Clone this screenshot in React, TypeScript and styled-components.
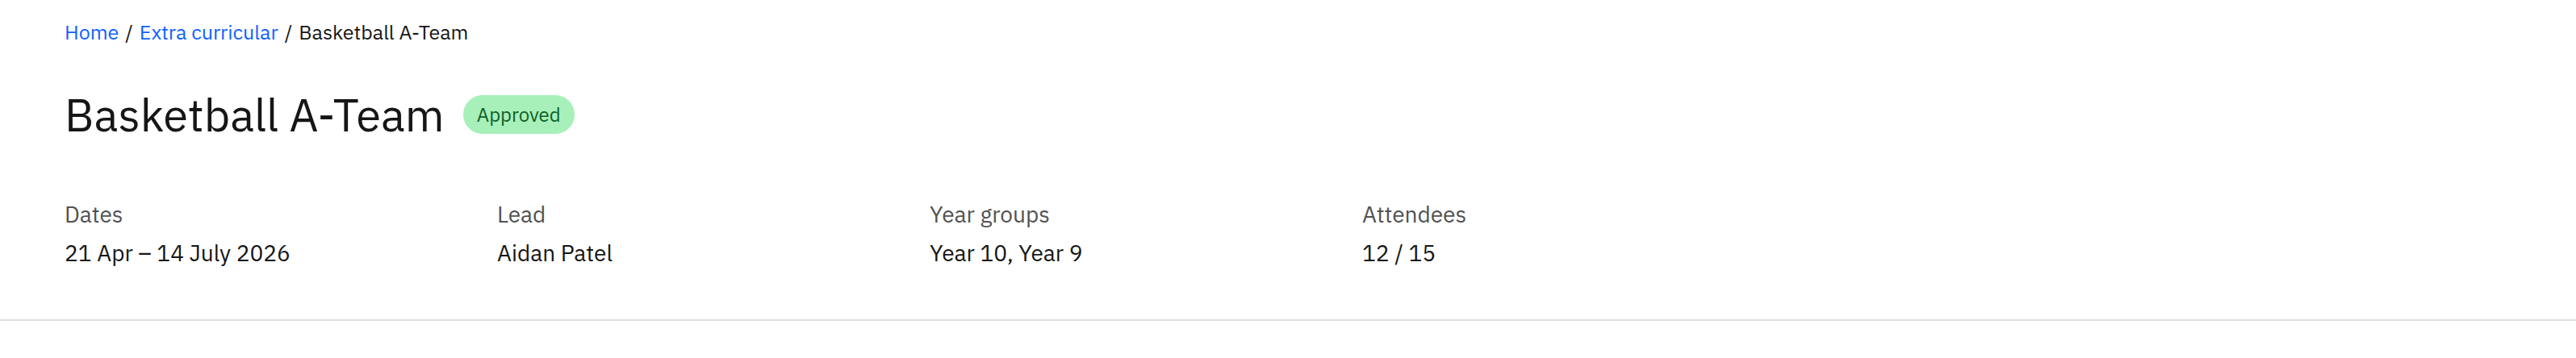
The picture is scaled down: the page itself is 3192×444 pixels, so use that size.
import React from "react";
import styled, { createGlobalStyle } from "styled-components";

const GlobalStyle = createGlobalStyle`
  html, body {
    margin: 0;
    padding: 0;
    background: #ffffff;
  }
  body {
    font-family: "IBM Plex Sans", "Noto Sans", "Liberation Sans", sans-serif;
    color: #161616;
  }
`;

const Header = styled.header`
  display: flex;
  flex-direction: column;
  padding: 24px 80px 64px;
  border-bottom: 2px solid #e0e0e0;
`;

const Breadcrumb = styled.nav`
  display: flex;
  align-items: center;
  gap: 8px;
  font-size: 25px;
  line-height: 32px;
`;

const Crumb = styled.a<{ $current?: boolean }>`
  color: ${(p) => (p.$current ? "#161616" : "#0f62fe")};
  text-decoration: none;
`;

const Slash = styled.span`
  color: #161616;
`;

const TitleRow = styled.div`
  display: flex;
  align-items: center;
  gap: 23px;
  margin-top: 50px;
`;

const Title = styled.h1`
  margin: 0;
  font-size: 56px;
  line-height: 72px;
  font-weight: 400;
  color: #161616;
`;

const Tag = styled.span`
  display: inline-flex;
  align-items: center;
  height: 48px;
  padding: 0 17px;
  border-radius: 24px;
  background: #a7f0ba;
  color: #0e6027;
  font-size: 24px;
  line-height: 32px;
`;

const Details = styled.dl`
  display: grid;
  grid-template-columns: repeat(4, 536px);
  margin: 70px 0 0;
`;

const Item = styled.div`
  display: flex;
  flex-direction: column;
  gap: 12px;
`;

const Label = styled.dt`
  font-size: 28px;
  line-height: 36px;
  color: #525252;
`;

const Value = styled.dd`
  margin: 0;
  font-size: 28px;
  line-height: 36px;
  color: #161616;
`;

const details = [
  { label: "Dates", value: "21 Apr – 14 July 2026" },
  { label: "Lead", value: "Aidan Patel" },
  { label: "Year groups", value: "Year 10, Year 9" },
  { label: "Attendees", value: "12 / 15" },
];

export default function App() {
  return (
    <>
      <GlobalStyle />
      <Header>
        <Breadcrumb>
          <Crumb href="#">Home</Crumb>
          <Slash>/</Slash>
          <Crumb href="#">Extra curricular</Crumb>
          <Slash>/</Slash>
          <Crumb $current>Basketball A-Team</Crumb>
        </Breadcrumb>
        <TitleRow>
          <Title>Basketball A-Team</Title>
          <Tag>Approved</Tag>
        </TitleRow>
        <Details>
          {details.map((d) => (
            <Item key={d.label}>
              <Label>{d.label}</Label>
              <Value>{d.value}</Value>
            </Item>
          ))}
        </Details>
      </Header>
    </>
  );
}
